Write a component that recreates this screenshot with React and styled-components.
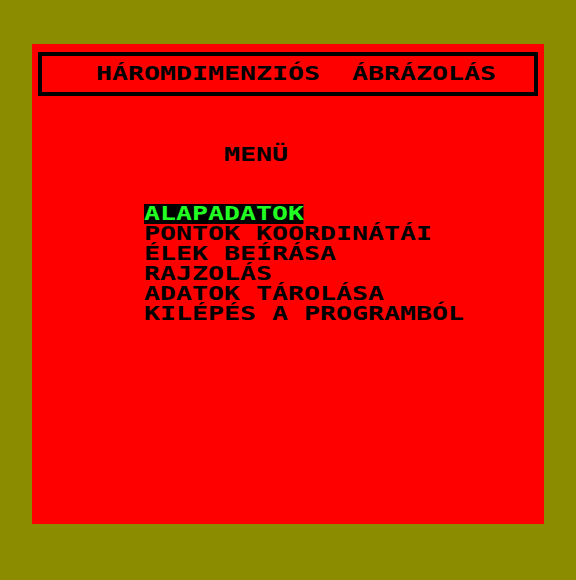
import React from "react";
import styled, { createGlobalStyle } from "styled-components";

const Global = createGlobalStyle`
  html, body { margin: 0; padding: 0; background: #8c8c00; }
  body { width: 576px; height: 580px; overflow: hidden; }
`;

const Monitor = styled.div`
  width: 576px;
  height: 580px;
  box-sizing: border-box;
  padding: 44px 32px 56px 32px;
  background: #8c8c00;
`;

const Screen = styled.div`
  width: 512px;
  height: 480px;
  box-sizing: border-box;
  background: #ff0000;
  padding-top: 8px;
  display: flex;
  flex-direction: column;
  font-family: "DejaVu Sans Mono", "Liberation Mono", monospace;
  font-weight: bold;
  font-size: 19px;
`;

const TitleBox = styled.div`
  margin-left: 6px;
  width: 500px;
  height: 44px;
  box-sizing: border-box;
  border: 4px solid #000;
  padding: 8px 0 0 54px;
`;

const Line = styled.div`
  height: 20px;
  line-height: 19px;
  padding-left: ${(p) => p.$indent || 0}px;
  margin-top: ${(p) => p.$gap || 0}px;
`;

const Text = styled.span`
  display: inline-block;
  height: 20px;
  white-space: pre;
  transform: scaleX(1.399);
  transform-origin: 0 0;
  color: ${(p) => (p.$selected ? "#22ff22" : "#000")};
  background: ${(p) => (p.$selected ? "#000" : "transparent")};
`;

const Menu = styled.div`
  display: flex;
  flex-direction: column;
  margin-top: 39px;
`;

const items = [
  "ALAPADATOK",
  "PONTOK KOORDINÁTÁI",
  "ÉLEK BEÍRÁSA",
  "RAJZOLÁS",
  "ADATOK TÁROLÁSA",
  "KILÉPÉS A PROGRAMBÓL",
];

export default function App() {
  return (
    <Monitor>
      <Global />
      <Screen>
        <TitleBox>
          <Line>
            <Text>HÁROMDIMENZIÓS  ÁBRÁZOLÁS</Text>
          </Line>
        </TitleBox>
        <Line $indent={192} $gap={49}>
          <Text>MENÜ</Text>
        </Line>
        <Menu>
          {items.map((it, i) => (
            <Line key={it} $indent={112}>
              <Text $selected={i === 0}>{it}</Text>
            </Line>
          ))}
        </Menu>
      </Screen>
    </Monitor>
  );
}
